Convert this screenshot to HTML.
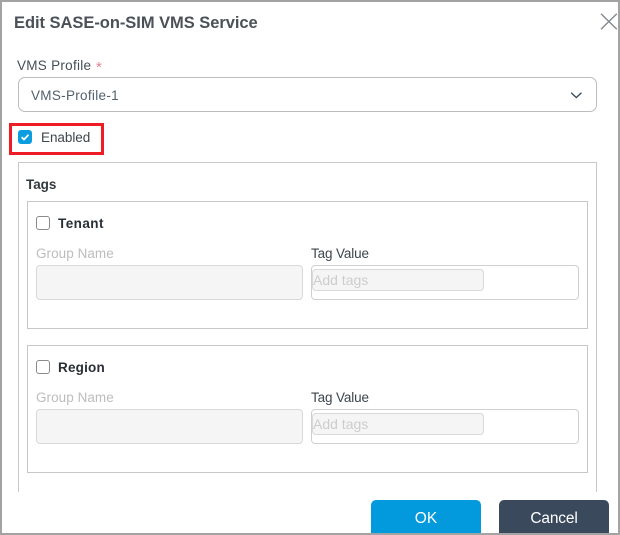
<!DOCTYPE html>
<html>
<head>
<meta charset="utf-8">
<style>
html,body{margin:0;padding:0;background:#fff}
#p{position:relative;width:620px;height:535px;overflow:hidden;background:#fff;font-family:"Liberation Sans",sans-serif;color:#3f4a54}
#p div{position:absolute;box-sizing:border-box}
.t{white-space:nowrap;line-height:16px;font-size:13.5px}
.box{border:1px solid #c8c8c8;background:#fff}
.lbl{color:#bdbdbd;letter-spacing:.05px}
.val{color:#3c444c;letter-spacing:-.13px}
.inp{background:#f5f5f5;border:1px solid #d9d9d9;border-radius:4px}
.cb{width:14px;height:14px;border:1px solid #8a8a8a;border-radius:3px;background:#fff}
.name{font-weight:bold;color:#2a2f35;font-size:13.5px}
.btn{top:500px;width:110px;height:33px;border-radius:5px 5px 0 0;color:#fff;text-align:center;line-height:38px;font-size:15.5px}
</style>
</head>
<body>
<div id="p">
  <div class="t" style="left:14px;top:14px;font-size:16.5px;line-height:18px;font-weight:bold;color:#4b5158;letter-spacing:-.04px">Edit SASE-on-SIM VMS Service</div>
  <svg style="position:absolute;left:600px;top:13px" width="18" height="17" viewBox="0 0 18 17"><path d="M1 .7 16.8 16.3M16.8 .7 1 16.3" stroke="#858a8e" stroke-width="1.4" fill="none"/></svg>

  <div class="t" style="left:17px;top:58px;color:#464e56;letter-spacing:.28px">VMS Profile</div>
  <div class="t" style="left:96px;top:60px;color:#ef7f8c;font-size:15px">*</div>
  <div class="box" style="left:18px;top:77px;width:579px;height:35px;border-radius:7px;border-color:#bcbcbc"></div>
  <div class="t" style="left:31px;top:88px;color:#53606c;letter-spacing:.3px">VMS-Profile-1</div>
  <svg style="position:absolute;left:570px;top:91px" width="13" height="9" viewBox="0 0 13 9"><path d="M1.2 1.8 6.3 6.6 11.4 1.8" stroke="#3a4a5c" stroke-width="1.4" fill="none"/></svg>

  <div style="left:9px;top:123px;width:95px;height:32px;border:3px solid #ee1c25"></div>
  <div style="left:18px;top:130px;width:14px;height:14px;border-radius:3px;background:#0c9de0"></div>
  <svg style="position:absolute;left:18px;top:130px" width="14" height="14" viewBox="0 0 14 14"><path d="M3.6 7.2 6 9.5 10.5 4.8" stroke="#fff" stroke-width="1.8" fill="none"/></svg>
  <div class="t" style="left:41px;top:130px;color:#3f464c;letter-spacing:-.05px">Enabled</div>

  <div style="left:18px;top:162px;width:579px;height:330px;border:1px solid #c8c8c8;border-bottom:0"></div>
  <div class="t" style="left:26px;top:177px;font-weight:bold;color:#33393f;letter-spacing:-.05px">Tags</div>

  <div class="box" style="left:27px;top:201px;width:561px;height:128px"></div>
  <div class="cb" style="left:36px;top:216px"></div>
  <div class="t name" style="left:58px;top:216px;letter-spacing:.45px">Tenant</div>
  <div class="t lbl" style="left:36px;top:246px">Group Name</div>
  <div class="inp" style="left:36px;top:265px;width:267px;height:35px"></div>
  <div class="t val" style="left:311px;top:246px">Tag Value</div>
  <div class="box" style="left:311px;top:265px;width:268px;height:35px;border-radius:4px;border-color:#d0d0d0"></div>
  <div class="inp" style="left:312px;top:269px;width:172px;height:22px"></div>
  <div class="t" style="left:313px;top:272px;color:#cdcdcd;font-size:14px">Add tags</div>

  <div class="box" style="left:27px;top:345px;width:561px;height:128px"></div>
  <div class="cb" style="left:36px;top:360px"></div>
  <div class="t name" style="left:58px;top:360px;letter-spacing:.2px">Region</div>
  <div class="t lbl" style="left:36px;top:390px">Group Name</div>
  <div class="inp" style="left:36px;top:409px;width:267px;height:35px"></div>
  <div class="t val" style="left:311px;top:390px">Tag Value</div>
  <div class="box" style="left:311px;top:409px;width:268px;height:35px;border-radius:4px;border-color:#d0d0d0"></div>
  <div class="inp" style="left:312px;top:413px;width:172px;height:22px"></div>
  <div class="t" style="left:313px;top:416px;color:#cdcdcd;font-size:14px">Add tags</div>

  <div class="btn" style="left:371px;background:#0299dd">OK</div>
  <div class="btn" style="left:499px;background:#3a4a5c;letter-spacing:-.15px">Cancel</div>

  <div style="left:0;top:0;width:620px;height:535px;border:2px solid #a3a3a3"></div>
</div>
</body>
</html>
